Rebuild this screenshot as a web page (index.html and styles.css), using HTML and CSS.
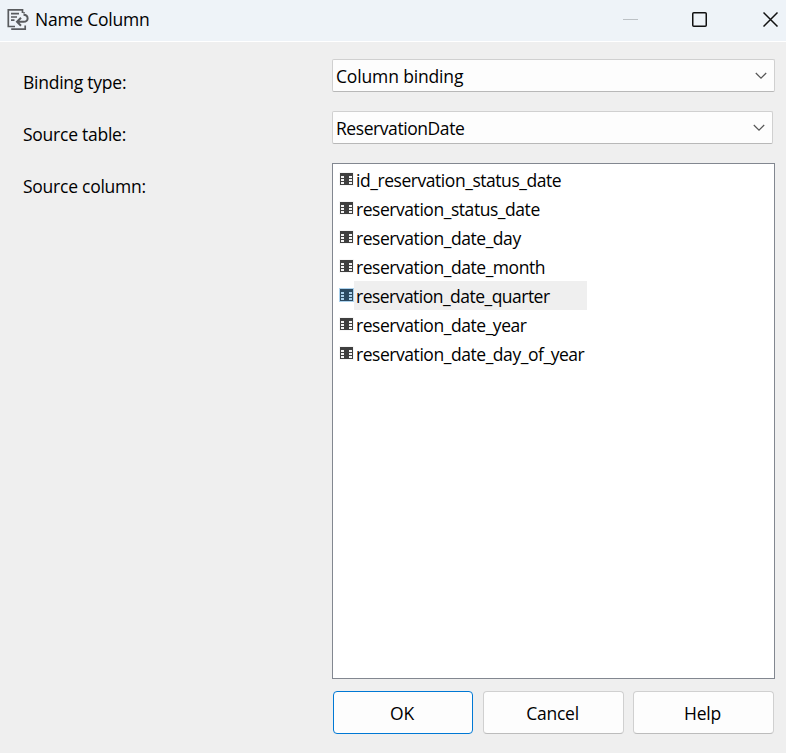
FILE: index.html
```
<!DOCTYPE html>
<html lang="en">
<head>
<meta charset="utf-8">
<title>Name Column</title>
<link rel="stylesheet" href="styles.css">
</head>
<body>
<svg class="defs" width="0" height="0" aria-hidden="true">
  <symbol id="col" viewBox="0 0 15 15">
    <rect class="halo" width="15" height="14"/>
    <path class="ink" d="M1 1h13v12H1z"/>
    <path class="cells" d="M2 4h3v2H2zM2 7h3v2H2zM2 10h3v2H2zM10 4h3v2h-3zM10 7h3v2h-3zM10 10h3v2h-3z"/>
  </symbol>
</svg>
<header class="titlebar">
  <svg class="app-icon" width="22" height="23" viewBox="0 0 22 23" fill="none" stroke="#595b5e" stroke-width="1.7">
    <path d="M15.5 5V1.8H1.3V18.5H8"/>
    <path d="M4 5.7H12M4 9H10M4 12.2H7.5"/>
    <path d="M4.2 21.2H18.2V17.5"/>
    <path d="M16.5 6.8C22 7 22 13.8 16.5 13.8H10.5M14 9.8L10 13.8L14 17.8" stroke-width="2"/>
    <path d="M17 4V5.5" stroke-width="1.5"/>
  </svg>
  <h1 class="title">Name Column</h1>
  <svg class="min" width="16" height="16" viewBox="0 0 16 16"><path d="M0 8.5H15" stroke="#bcc1c5"/></svg>
  <svg class="max" width="16" height="16" viewBox="0 0 16 16"><rect x=".75" y="1.75" width="13.5" height="13.5" rx="1" fill="none" stroke="#111" stroke-width="1.5"/></svg>
  <svg class="close" width="16" height="16" viewBox="0 0 16 16"><path d="M.5 1.5L14.5 15.5M14.5 1.5L.5 15.5" stroke="#111" stroke-width="1.5"/></svg>
</header>
<main class="form">
  <div class="label">Binding type:</div>
  <div class="combo"><span class="binding">Column binding</span><svg class="chev" width="12" height="8" viewBox="0 0 12 8"><path d="M.8 1L6 6.2L11.2 1"/></svg></div>
  <div class="label">Source table:</div>
  <div class="combo narrow"><span class="source">ReservationDate</span><svg class="chev" width="12" height="8" viewBox="0 0 12 8"><path d="M.8 1L6 6.2L11.2 1"/></svg></div>
  <div class="label">Source column:</div>
  <ul class="list">
    <li><svg class="icon"><use href="#col"/></svg><span>id_reservation_status_date</span></li>
    <li><svg class="icon"><use href="#col"/></svg><span>reservation_status_date</span></li>
    <li><svg class="icon"><use href="#col"/></svg><span>reservation_date_day</span></li>
    <li><svg class="icon"><use href="#col"/></svg><span>reservation_date_month</span></li>
    <li class="selected"><svg class="icon"><use href="#col"/></svg><span>reservation_date_quarter</span></li>
    <li><svg class="icon"><use href="#col"/></svg><span>reservation_date_year</span></li>
    <li><svg class="icon"><use href="#col"/></svg><span>reservation_date_day_of_year</span></li>
  </ul>
</main>
<footer class="buttons">
  <button class="primary">OK</button>
  <button>Cancel</button>
  <button>Help</button>
</footer>
</body>
</html>
```
FILE: styles.css
```
* { box-sizing: border-box; }
body {
  margin: 0;
  width: 786px;
  height: 753px;
  overflow: hidden;
  background: #efefef;
  color: #000;
  font: 17.5px/24px "Open Sans", "Noto Sans", sans-serif;
  letter-spacing: -0.25px;
}
.defs { display: block; }
.titlebar {
  display: flex;
  align-items: center;
  height: 42px;
  padding: 0 8px 3px 7px;
  background: #eef3f8;
  border-bottom: 1px solid #fff;
}
.titlebar svg { flex: none; }
.title {
  flex: 1;
  margin: 0 0 0 6px;
  font-size: 17.5px;
  font-weight: 400;
}
.max { margin-left: 53px; }
.close { margin-left: 55px; }
.titlebar .close { margin-right: -1px; }
.form {
  display: grid;
  grid-template-columns: 309px 443px;
  grid-template-rows: 33px 33px 516px;
  row-gap: 19px;
  padding: 17px 0 0 23px;
}
.label { padding-top: 11px; }
.combo {
  display: flex;
  align-items: center;
  justify-content: space-between;
  padding: 1px 7px 0 3px;
  background: #fdfdfd;
  border: 1px solid #d0d0d0;
  border-bottom-color: #b8b8b8;
  border-radius: 2px;
}
.narrow { width: 441px; }
.binding { letter-spacing: -0.15px; }
.source { letter-spacing: -0.43px; }
.chev { fill: none; stroke: #555; stroke-width: 1.2; }
.list {
  margin: 0;
  padding: 1px 0 0 6px;
  list-style: none;
  letter-spacing: -0.45px;
  background: #fff;
  border: 1px solid #828790;
}
.list li { display: flex; height: 29px; }
.icon { width: 15px; height: 15px; margin-top: 7px; flex: none; }
.halo { fill: var(--halo, #f6f6f6); }
.ink { fill: var(--ink, #3f3f3f); }
.cells { fill: var(--cells, #f3f3f3); }
.list span { padding: 3px 2px 0; white-space: nowrap; }
.selected { --halo: #add3ee; --ink: #2c4b62; --cells: #acd2ec; }
.list .selected span { width: 233px; background: #efefef; letter-spacing: -0.52px; }
.buttons {
  display: flex;
  gap: 10px;
  padding: 12px 0 0 333px;
}
.buttons button {
  width: 141px;
  height: 43px;
  padding: 0 2px 0 0;
  font: inherit;
  letter-spacing: inherit;
  color: inherit;
  background: #fdfdfd;
  border: 1px solid #d0d0d0;
  border-bottom-color: #bcbcbc;
  border-radius: 4px;
}
.buttons .primary { width: 140px; border-color: #0078d4; }
.buttons button:last-child { margin-left: -1px; }
```
